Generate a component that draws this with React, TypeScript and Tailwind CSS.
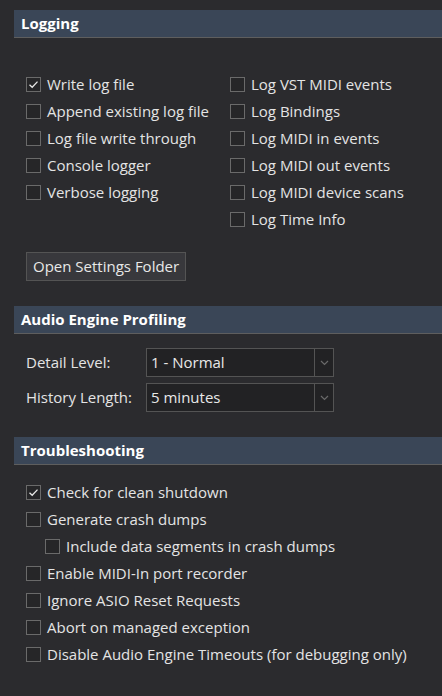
import React from "react"

const font = { fontFamily: '"Open Sans", "Noto Sans", sans-serif' }

function Header({ title }: { title: string }) {
  return (
    <div className="h-[28px] bg-[#3a4657] border-b border-[#5e5e5e] pl-[7px] flex items-center text-[15px] font-bold text-white">
      {title}
    </div>
  )
}

function Check({ label, checked = false, indent = false }: { label: string; checked?: boolean; indent?: boolean }) {
  return (
    <div className={`h-[27px] flex items-center gap-[6px] ${indent ? "pl-[19px]" : ""}`}>
      <span className="w-[15px] h-[15px] border border-[#6a6a6a] bg-[#262628] flex items-center justify-center shrink-0">
        {checked && (
          <svg width="11" height="11" viewBox="0 0 11 11">
            <path d="M1.5 5.8 L4.2 8.3 L9.5 2.6" fill="none" stroke="#e6e6e6" strokeWidth="1.3" />
          </svg>
        )}
      </span>
      <span className="text-[15px] text-[#e4e4e4] whitespace-nowrap">{label}</span>
    </div>
  )
}

function Select({ label, value }: { label: string; value: string }) {
  return (
    <div className="flex items-center">
      <span className="w-[120px] text-[15px] text-[#e4e4e4]">{label}</span>
      <div className="w-[188px] h-[29px] border border-[#545454] bg-[#222224] flex">
        <span className="flex-1 pl-[4px] text-[15px] text-[#e8e8e8] leading-[27px]">{value}</span>
        <span className="w-[19px] border-l border-[#545454] flex items-center justify-center">
          <svg width="9" height="6" viewBox="0 0 9 6">
            <path d="M1 1 L4.5 4.5 L8 1" fill="none" stroke="#6a6a6a" strokeWidth="1.2" />
          </svg>
        </span>
      </div>
    </div>
  )
}

export default function App() {
  return (
    <div className="w-[442px] h-[696px] bg-[#2b2b2e] pt-[10px] pl-[14px] overflow-hidden" style={font}>
      <Header title="Logging" />
      <div className="pl-[12px] mt-[33px] grid grid-cols-[204px_1fr]">
        <div>
          <Check label="Write log file" checked />
          <Check label="Append existing log file" />
          <Check label="Log file write through" />
          <Check label="Console logger" />
          <Check label="Verbose logging" />
        </div>
        <div>
          <Check label="Log VST MIDI events" />
          <Check label="Log Bindings" />
          <Check label="Log MIDI in events" />
          <Check label="Log MIDI out events" />
          <Check label="Log MIDI device scans" />
          <Check label="Log Time Info" />
        </div>
      </div>
      <div className="pl-[12px] mt-[19px]">
        <button className="h-[29px] px-[6px] bg-[#38383c] border border-[#545454] text-[15px] text-[#e8e8e8]">
          Open Settings Folder
        </button>
      </div>
      <div className="mt-[25px]">
        <Header title="Audio Engine Profiling" />
      </div>
      <div className="pl-[12px] mt-[14px] flex flex-col gap-[6px]">
        <Select label="Detail Level:" value="1 - Normal" />
        <Select label="History Length:" value="5 minutes" />
      </div>
      <div className="mt-[25px]">
        <Header title="Troubleshooting" />
      </div>
      <div className="pl-[12px] mt-[14px]">
        <Check label="Check for clean shutdown" checked />
        <Check label="Generate crash dumps" />
        <Check label="Include data segments in crash dumps" indent />
        <Check label="Enable MIDI-In port recorder" />
        <Check label="Ignore ASIO Reset Requests" />
        <Check label="Abort on managed exception" />
        <Check label="Disable Audio Engine Timeouts (for debugging only)" />
      </div>
    </div>
  )
}
